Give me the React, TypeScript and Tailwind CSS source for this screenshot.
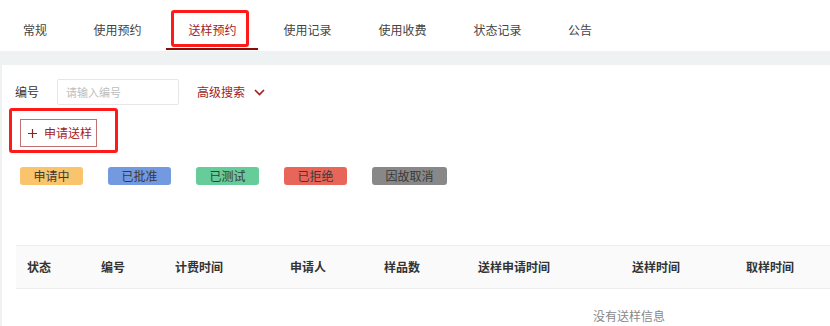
import React from "react";

const tabs = [
  { label: "常规", w: "w-[70px]" },
  { label: "使用预约", w: "w-[95px]" },
  { label: "送样预约", w: "w-[95px]" },
  { label: "使用记录", w: "w-[95px]" },
  { label: "使用收费", w: "w-[95px]" },
  { label: "状态记录", w: "w-[95px]" },
  { label: "公告", w: "w-[70px]" },
];

const badges = [
  { label: "申请中", cls: "bg-[#f9c46b]" },
  { label: "已批准", cls: "bg-[#7399e0]" },
  { label: "已测试", cls: "bg-[#66cc99]" },
  { label: "已拒绝", cls: "bg-[#e8655a]" },
  { label: "因故取消", cls: "bg-[#888888]" },
];

const columns = [
  { label: "状态", w: "w-[74px]" },
  { label: "编号", w: "w-[74px]" },
  { label: "计费时间", w: "w-[115px]" },
  { label: "申请人", w: "w-[94px]" },
  { label: "样品数", w: "w-[94px]" },
  { label: "送样申请时间", w: "w-[154px]" },
  { label: "送样时间", w: "w-[114px]" },
  { label: "取样时间", w: "w-[114px]" },
];

export default function App() {
  return (
    <div
      className="w-[830px] h-[326px] overflow-hidden bg-[#eef2f2] text-[12px] text-[#333]"
      style={{ fontFamily: '"Noto Sans CJK SC", "Noto Sans", sans-serif' }}
    >
      {/* top tabs */}
      <div className="flex h-[51px] bg-white">
        {tabs.map((t) => {
          const active = t.label === "送样预约";
          return (
            <div
              key={t.label}
              className={
                "relative flex items-center justify-center pt-[8px] " +
                t.w +
                (active ? " text-[#a31c1c]" : " text-[#444]")
              }
            >
              {t.label}
              {active && (
                <>
                  <span className="absolute left-[1px] right-[2px] bottom-[1px] h-[2px] bg-[#8b0a0a]" />
                  <span className="absolute left-[6px] right-[11px] top-[10px] bottom-[4px] border-[3px] border-[#ff1a1a] rounded-[3px]" />
                </>
              )}
            </div>
          );
        })}
      </div>

      <div className="h-[14px]" />

      {/* main panel */}
      <div className="ml-[2px] bg-white h-[261px] pt-[14px]">
        <div className="flex items-center h-[26px]">
          <span className="ml-[13px] text-[#333]">编号</span>
          <div className="ml-[18px] w-[122px] h-[26px] border border-[#e6e6e6] rounded-[2px] flex items-center pl-[8px] text-[#bdbdbd] text-[11px]">
            请输入编号
          </div>
          <span className="ml-[18px] text-[#9b1d1d]">高级搜索</span>
          <svg className="ml-[9px]" width="11" height="7" viewBox="0 0 11 7">
            <path d="M1 1l4.5 4.5L10 1" fill="none" stroke="#a31c1c" strokeWidth="1.6" />
          </svg>
        </div>

        <div className="mt-[14px] ml-[18px] flex">
          <div className="relative">
            <div className="flex items-center gap-[7px] h-[28px] w-[77px] border border-[#c27272] text-[#a31c1c] pl-[7px] text-[12px]">
              <svg width="9" height="9" viewBox="0 0 9 9">
                <path d="M4.5 0v9M0 4.5h9" stroke="#7a2a2a" strokeWidth="1.2" />
              </svg>
              <span>申请送样</span>
            </div>
            <span className="absolute left-[-11px] right-[-21px] top-[-11px] bottom-[-6px] border-[3px] border-[#ff1a1a] rounded-[3px]" />
          </div>
        </div>

        <div className="mt-[20px] ml-[18px] flex gap-[25px]">
          {badges.map((b) => (
            <span
              key={b.label}
              className={"h-[18px] px-[13.5px] rounded-[3px] flex items-center text-[#3a3a3a] " + b.cls}
            >
              {b.label}
            </span>
          ))}
        </div>

        <div className="mt-[60px] ml-[14px] w-[1226px]">
          <div className="flex h-[44px] items-center bg-[#fafafa] border-y border-[#eeeeee] pl-[11px] font-bold text-[#333]">
            {columns.map((c) => (
              <div key={c.label} className={c.w}>
                {c.label}
              </div>
            ))}
          </div>
          <div className="text-center pt-[18px] text-[#888]">没有送样信息</div>
        </div>
      </div>
    </div>
  );
}
